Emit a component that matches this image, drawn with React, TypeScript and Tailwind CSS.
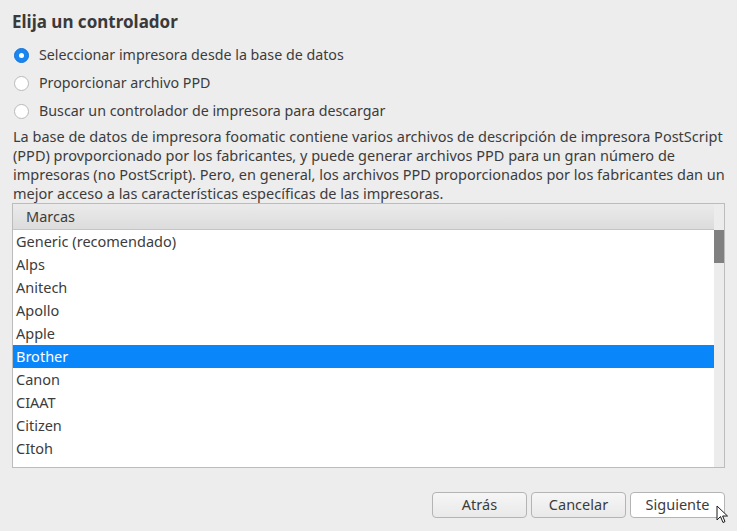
import React from "react";

const brands = [
    "Generic (recomendado)",
    "Alps",
    "Anitech",
    "Apollo",
    "Apple",
    "Brother",
    "Canon",
    "CIAAT",
    "Citizen",
    "CItoh",
];

const options = [
    "Seleccionar impresora desde la base de datos",
    "Proporcionar archivo PPD",
    "Buscar un controlador de impresora para descargar",
];

const Radio = ({ checked }: { checked: boolean }) =>
    checked ? (
        <span className="w-[15px] h-[15px] rounded-full bg-[#1a86f0] border border-[#1272d6] flex items-center justify-center shrink-0">
            <span className="w-[5px] h-[5px] rounded-full bg-white" />
        </span>
    ) : (
        <span className="w-[15px] h-[15px] rounded-full bg-white border border-[#b9b9b9] shrink-0" />
    );

const Cursor = () => (
    <svg className="absolute left-[716px] top-[505px]" width="13" height="20" viewBox="0 0 13 20">
        <path d="M1 1 L1 15 L4.5 11.5 L7 17.5 L9 16.6 L6.6 11 L11.5 11 Z" fill="#ffffff" stroke="#1a1a1a" strokeWidth="1" strokeLinejoin="round" />
    </svg>
);

export default function App() {
    return (
        <div
            className="relative w-[737px] h-[531px] bg-[#ededed] text-[#3c3c3c] overflow-hidden"
            style={{ fontFamily: '"Noto Sans", "Open Sans", sans-serif' }}
        >
            <div className="pl-[12px] pr-[12px] pt-[10px]">
                <h1 className="text-[17px] leading-[24px] font-bold text-[#3a3a3a]">Elija un controlador</h1>

                <div className="mt-[7px] flex flex-col">
                    {options.map((o, i) => (
                        <div key={o} className="h-[28px] flex items-center gap-[10px] pl-[2px] text-[14.25px]">
                            <Radio checked={i === 0} />
                            <span>{o}</span>
                        </div>
                    ))}
                </div>

                <p className="mt-[2px] text-[14.5px] leading-[19px] pl-[1px]">
                    La base de datos de impresora foomatic contiene varios archivos de descripción de impresora PostScript (PPD) provporcionado por los fabricantes, y puede generar archivos PPD para un gran número de impresoras (no PostScript). Pero, en general, los archivos PPD proporcionados por los fabricantes dan un mejor acceso a las características específicas de las impresoras.
                </p>

                <div className="mt-0 w-[713px] h-[265px] border border-[#bcbcbc] bg-white flex">
                    <div className="flex-1 flex flex-col">
                        <div className="h-[26px] shrink-0 bg-gradient-to-b from-[#ebebeb] to-[#dcdcdc] border-b border-[#c4c4c4] flex items-center pl-[13px] text-[14.5px]">
                            Marcas
                        </div>
                        <div className="flex flex-col">
                            {brands.map((b) => (
                                <div
                                    key={b}
                                    className={
                                        b === "Brother"
                                            ? "h-[23px] flex items-center pl-[3px] text-[14.5px] bg-[#0a86fb] text-white"
                                            : "h-[23px] flex items-center pl-[3px] text-[14.5px]"
                                    }
                                >
                                    {b}
                                </div>
                            ))}
                        </div>
                    </div>
                    <div className="w-[10px] bg-[#ececec] flex flex-col">
                        <div className="h-[26px]" />
                        <div className="h-[33px] bg-[#808080]" />
                    </div>
                </div>

                <div className="mt-[24px] flex justify-end gap-[4px]">
                    {["Atrás", "Cancelar", "Siguiente"].map((t) => (
                        <button
                            key={t}
                            className={
                                t === "Siguiente"
                                    ? "w-[95px] h-[26px] rounded-[4px] border border-[#b4b4b4] bg-white text-[14.5px] text-[#3c3c3c]"
                                    : "w-[95px] h-[26px] rounded-[4px] border border-[#b4b4b4] bg-gradient-to-b from-[#f6f6f6] to-[#e9e9e9] text-[14.5px] text-[#3c3c3c]"
                            }
                        >
                            {t}
                        </button>
                    ))}
                </div>
            </div>
            <Cursor />
        </div>
    );
}
